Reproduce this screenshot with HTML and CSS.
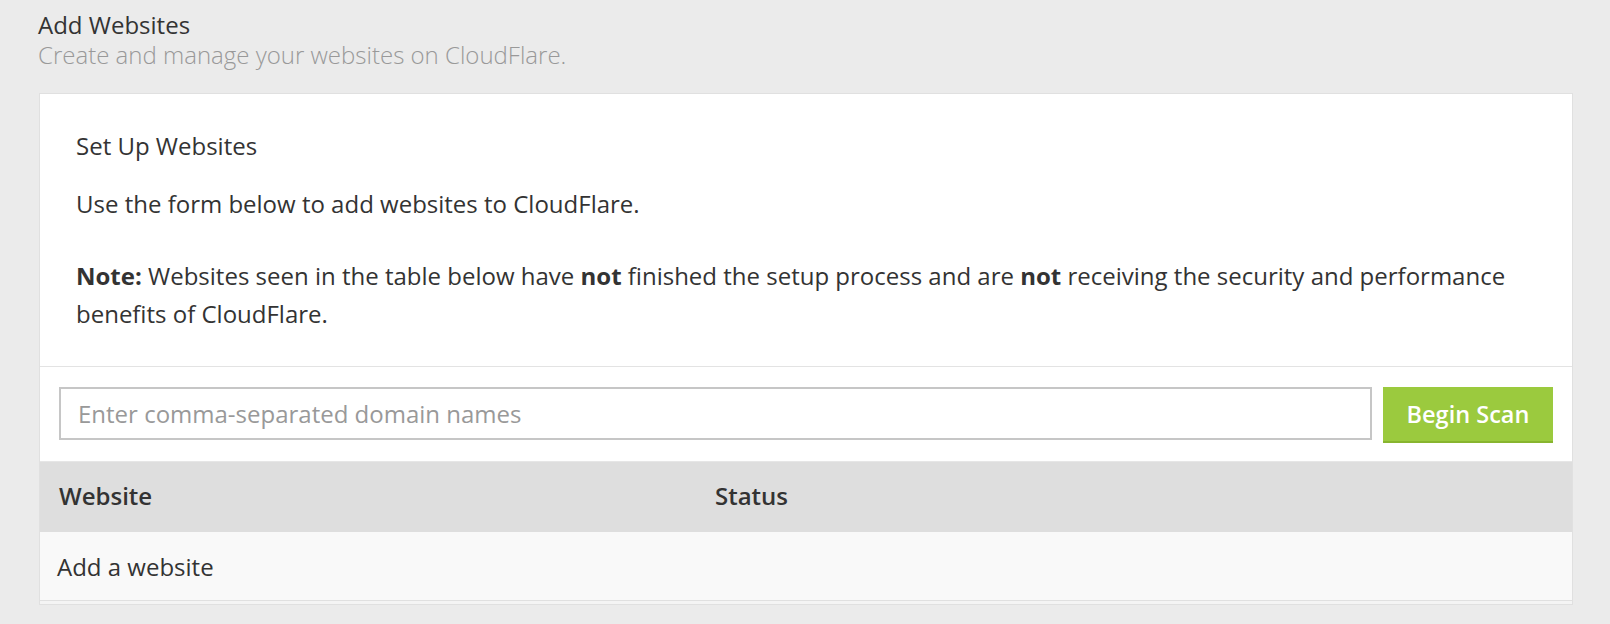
FILE: index.html
```html
<!DOCTYPE html>
<html lang="en">
<head>
<meta charset="utf-8">
<title>Add Websites</title>
<link rel="stylesheet" href="styles.css">
</head>
<body>
<div class="page">
  <header class="page-header">
    <h1 class="page-title">Add Websites</h1>
    <p class="page-subtitle">Create and manage your websites on CloudFlare.</p>
  </header>
  <section class="card">
    <div class="card-intro">
      <h2 class="card-title">Set Up Websites</h2>
      <p class="card-text">Use the form below to add websites to CloudFlare.</p>
      <p class="card-text card-note"><strong>Note:</strong> Websites seen in the table below have <strong>not</strong> finished the setup process and are <strong>not</strong> receiving the security and performance benefits of CloudFlare.</p>
    </div>
    <form class="scan-form">
      <input class="scan-input" type="text" placeholder="Enter comma-separated domain names">
      <button class="scan-button" type="button">Begin Scan</button>
    </form>
    <div class="table">
      <div class="table-head">
        <div class="col col-site">Website</div>
        <div class="col col-status">Status</div>
      </div>
      <div class="table-row">
        <div class="col col-add">Add a website</div>
      </div>
    </div>
  </section>
</div>
</body>
</html>
```
FILE: styles.css
```css
html, body {
  margin: 0;
  padding: 0;
  background: #ebebeb;
}
body {
  font-family: "Open Sans", "Liberation Sans", sans-serif;
  color: #333;
}
.page {
  padding: 8px 37px 0 38px;
}
.page-title {
  margin: 0;
  font-size: 24px;
  font-weight: 400;
  line-height: 34px;
  color: #333;
}
.page-subtitle {
  margin: 0;
  font-size: 24px;
  font-weight: 300;
  line-height: 26px;
  color: #999;
}
.card {
  margin-top: 25px;
  margin-left: 1px;
  background: #fff;
  border: 1px solid #e0e0e0;
  border-bottom: 0;
}
.card-intro {
  padding: 33px 36px 33px;
  border-bottom: 1px solid #e3e3e3;
}
.card-title {
  margin: 0 0 20px;
  font-size: 24px;
  font-weight: 400;
  line-height: 38px;
}
.card-text {
  margin: 0 0 34px;
  font-size: 24px;
  line-height: 38px;
}
.card-note {
  margin-bottom: 0;
}
.card-text strong {
  font-weight: 700;
}
.scan-form {
  display: flex;
  gap: 11px;
  padding: 20px 19px 18px 19px;
  margin: 0;
  align-items: flex-start;
}
.scan-input {
  flex: 1;
  height: 53px;
  box-sizing: border-box;
  border: 2px solid #c6c6c6;
  padding: 0 17px;
  font-family: "Open Sans", "Liberation Sans", sans-serif;
  font-size: 24px;
  color: #333;
  background: #fff;
  outline: none;
}
.scan-input::placeholder {
  color: #999;
}
.scan-button {
  width: 170px;
  height: 56px;
  border: 0;
  border-bottom: 2px solid #88b52f;
  background: #9bca3e;
  color: #fff;
  font-family: "Open Sans", "Liberation Sans", sans-serif;
  font-size: 23.5px;
  font-weight: 600;
  padding: 0;
  cursor: pointer;
}
.table-head {
  display: flex;
  align-items: center;
  box-sizing: border-box;
  height: 71px;
  padding-bottom: 4px;
  background: #dedede;
  border-top: 1px solid #e6e6e6;
  font-size: 24px;
  font-weight: 600;
}
.table-row {
  display: flex;
  align-items: center;
  height: 68px;
  background: #f9f9f9;
  border-bottom: 1px solid #e0e0e0;
  font-size: 24px;
}
.table::after {
  content: "";
  display: block;
  height: 3px;
  background: #f4f4f4;
  border-bottom: 1px solid #e0e0e0;
}
.col-site {
  width: 656px;
  padding-left: 19px;
}
.col-add {
  padding-left: 17px;
}
```
